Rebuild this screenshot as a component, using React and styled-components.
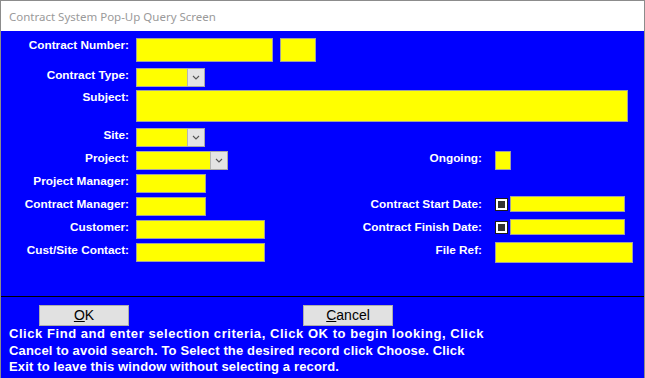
import React from "react";
import styled, { createGlobalStyle } from "styled-components";

const Global = createGlobalStyle`
  html, body { margin: 0; padding: 0; background: #ffffff; }
  body { width: 645px; height: 378px; overflow: hidden; font-family: "Liberation Sans", Arial, sans-serif; }
  * { box-sizing: border-box; }
`;

const Window = styled.div`
  width: 645px;
  height: 378px;
  display: flex;
  flex-direction: column;
  border: 1px solid #8c8c8c;
  border-bottom: none;
  background: #ffffff;
`;

const TitleBar = styled.div`
  height: 30px;
  flex: none;
  display: flex;
  align-items: center;
  padding-left: 8px;
  font-family: "Noto Sans", "Open Sans", sans-serif;
  font-size: 11.5px;
  color: #9a9a9a;
  background: #ffffff;
`;

const Body = styled.div`
  flex: 1;
  display: flex;
  flex-direction: column;
  background: #0000ff;
`;

const Form = styled.div`
  height: 265px;
  flex: none;
  display: flex;
  flex-direction: column;
  padding-top: 7px;
`;

const Row = styled.div`
  display: grid;
  grid-template-columns: 135px 224px 135px 1fr;
  align-items: start;
  height: ${(p) => p.$h}px;
  margin-top: ${(p) => p.$mt || 0}px;
`;

const Label = styled.div`
  font-family: "Liberation Sans", Arial, sans-serif;
  font-weight: bold;
  font-size: 11.8px;
  line-height: 15px;
  color: #ffffff;
  text-align: right;
  padding-right: ${(p) => p.$pr}px;
  white-space: nowrap;
`;

const Cell = styled.div`
  display: flex;
  align-items: center;
  gap: ${(p) => p.$gap || 0}px;
  grid-column: ${(p) => p.$span || "auto"};
  margin-top: ${(p) => p.$mt || 0}px;
`;

const Field = styled.div`
  width: ${(p) => p.$w}px;
  height: ${(p) => p.$h}px;
  background: #ffff00;
  border: 1px solid #a0a0a0;
  flex: none;
`;

const Combo = styled.div`
  width: ${(p) => p.$w}px;
  height: 19px;
  display: flex;
  border: 1px solid #a8a8a8;
  background: #ffff00;
  flex: none;
`;

const ComboText = styled.div`
  flex: 1;
`;

const ComboButton = styled.div`
  width: 17px;
  height: 100%;
  background: #e3e3e3;
  border-left: 1px solid #b4b4b4;
  display: flex;
  align-items: center;
  justify-content: center;
`;

const Check = styled.div`
  width: 13px;
  height: 13px;
  border: 1px solid #1a1a1a;
  background: #ffffff;
  padding: 2px;
  flex: none;
  &::after {
    content: "";
    display: block;
    width: 100%;
    height: 100%;
    background: #333333;
  }
`;

const Divider = styled.div`
  height: 1px;
  background: #000000;
  flex: none;
`;

const Footer = styled.div`
  display: flex;
  flex-direction: column;
  padding-top: 8px;
`;

const Buttons = styled.div`
  display: flex;
  gap: 174px;
  padding-left: 38px;
`;

const Button = styled.button`
  width: 90px;
  height: 21px;
  background: #e1e1e1;
  border: 1px solid #adadad;
  font-family: "Liberation Sans", Arial, sans-serif;
  font-size: 14px;
  color: #000000;
  padding: 0;
  line-height: 19px;
  u { text-decoration: underline; }
`;

const Help = styled.div`
  padding-left: 8px;
  display: flex;
  flex-direction: column;
`;

const HelpLine = styled.span`
  font-family: "Liberation Sans", Arial, sans-serif;
  font-weight: bold;
  font-size: 13px;
  letter-spacing: ${(p) => p.$ls || 0.15}px;
  line-height: 16.5px;
  color: #ffffff;
  white-space: nowrap;
`;

const Chevron = () => (
  <svg width="8" height="5" viewBox="0 0 8 5">
    <polyline points="1,1 4,4 7,1" fill="none" stroke="#555" strokeWidth="1.1" />
  </svg>
);

const ComboBox = ({ w }) => (
  <Combo $w={w}>
    <ComboText />
    <ComboButton>
      <Chevron />
    </ComboButton>
  </Combo>
);

export default function App() {
  return (
    <>
      <Global />
      <Window>
        <TitleBar>Contract System Pop-Up Query Screen</TitleBar>
        <Body>
          <Form>
            <Row $h={24}>
              <Label $pr={7}>Contract Number:</Label>
              <Cell $gap={7}>
                <Field $w={137} $h={24} />
                <Field $w={36} $h={24} />
              </Cell>
            </Row>
            <Row $h={19} $mt={6}>
              <Label $pr={7}>Contract Type:</Label>
              <Cell>
                <ComboBox w={69} />
              </Cell>
            </Row>
            <Row $h={32} $mt={3}>
              <Label $pr={7}>Subject:</Label>
              <Cell $span="2 / 5">
                <Field $w={492} $h={32} />
              </Cell>
            </Row>
            <Row $h={19} $mt={6}>
              <Label $pr={7}>Site:</Label>
              <Cell>
                <ComboBox w={69} />
              </Cell>
            </Row>
            <Row $h={19} $mt={4}>
              <Label $pr={7}>Project:</Label>
              <Cell>
                <ComboBox w={92} />
              </Cell>
              <Label $pr={13}>Ongoing:</Label>
              <Cell>
                <Field $w={16} $h={19} />
              </Cell>
            </Row>
            <Row $h={19} $mt={4}>
              <Label $pr={7}>Project Manager:</Label>
              <Cell>
                <Field $w={70} $h={19} />
              </Cell>
            </Row>
            <Row $h={19} $mt={4}>
              <Label $pr={7}>Contract Manager:</Label>
              <Cell>
                <Field $w={70} $h={19} />
              </Cell>
              <Label $pr={13}>Contract Start Date:</Label>
              <Cell $gap={2} $mt={-1}>
                <Check />
                <Field $w={115} $h={16} />
              </Cell>
            </Row>
            <Row $h={19} $mt={4}>
              <Label $pr={7}>Customer:</Label>
              <Cell>
                <Field $w={129} $h={19} />
              </Cell>
              <Label $pr={13}>Contract Finish Date:</Label>
              <Cell $gap={2} $mt={-1}>
                <Check />
                <Field $w={115} $h={16} />
              </Cell>
            </Row>
            <Row $h={19} $mt={4}>
              <Label $pr={7}>Cust/Site Contact:</Label>
              <Cell>
                <Field $w={129} $h={19} />
              </Cell>
              <Label $pr={13}>File Ref:</Label>
              <Cell $mt={-1}>
                <Field $w={138} $h={21} />
              </Cell>
            </Row>
          </Form>
          <Divider />
          <Footer>
            <Buttons>
              <Button>
                <u>O</u>K
              </Button>
              <Button>
                <u>C</u>ancel
              </Button>
            </Buttons>
            <Help>
              <HelpLine $ls={0.55}>
                Click Find and enter selection criteria, Click OK to begin looking, Click
              </HelpLine>
              <HelpLine>
                Cancel to avoid search. To Select the desired record click Choose. Click
              </HelpLine>
              <HelpLine>Exit to leave this window without selecting a record.</HelpLine>
            </Help>
          </Footer>
        </Body>
      </Window>
    </>
  );
}
